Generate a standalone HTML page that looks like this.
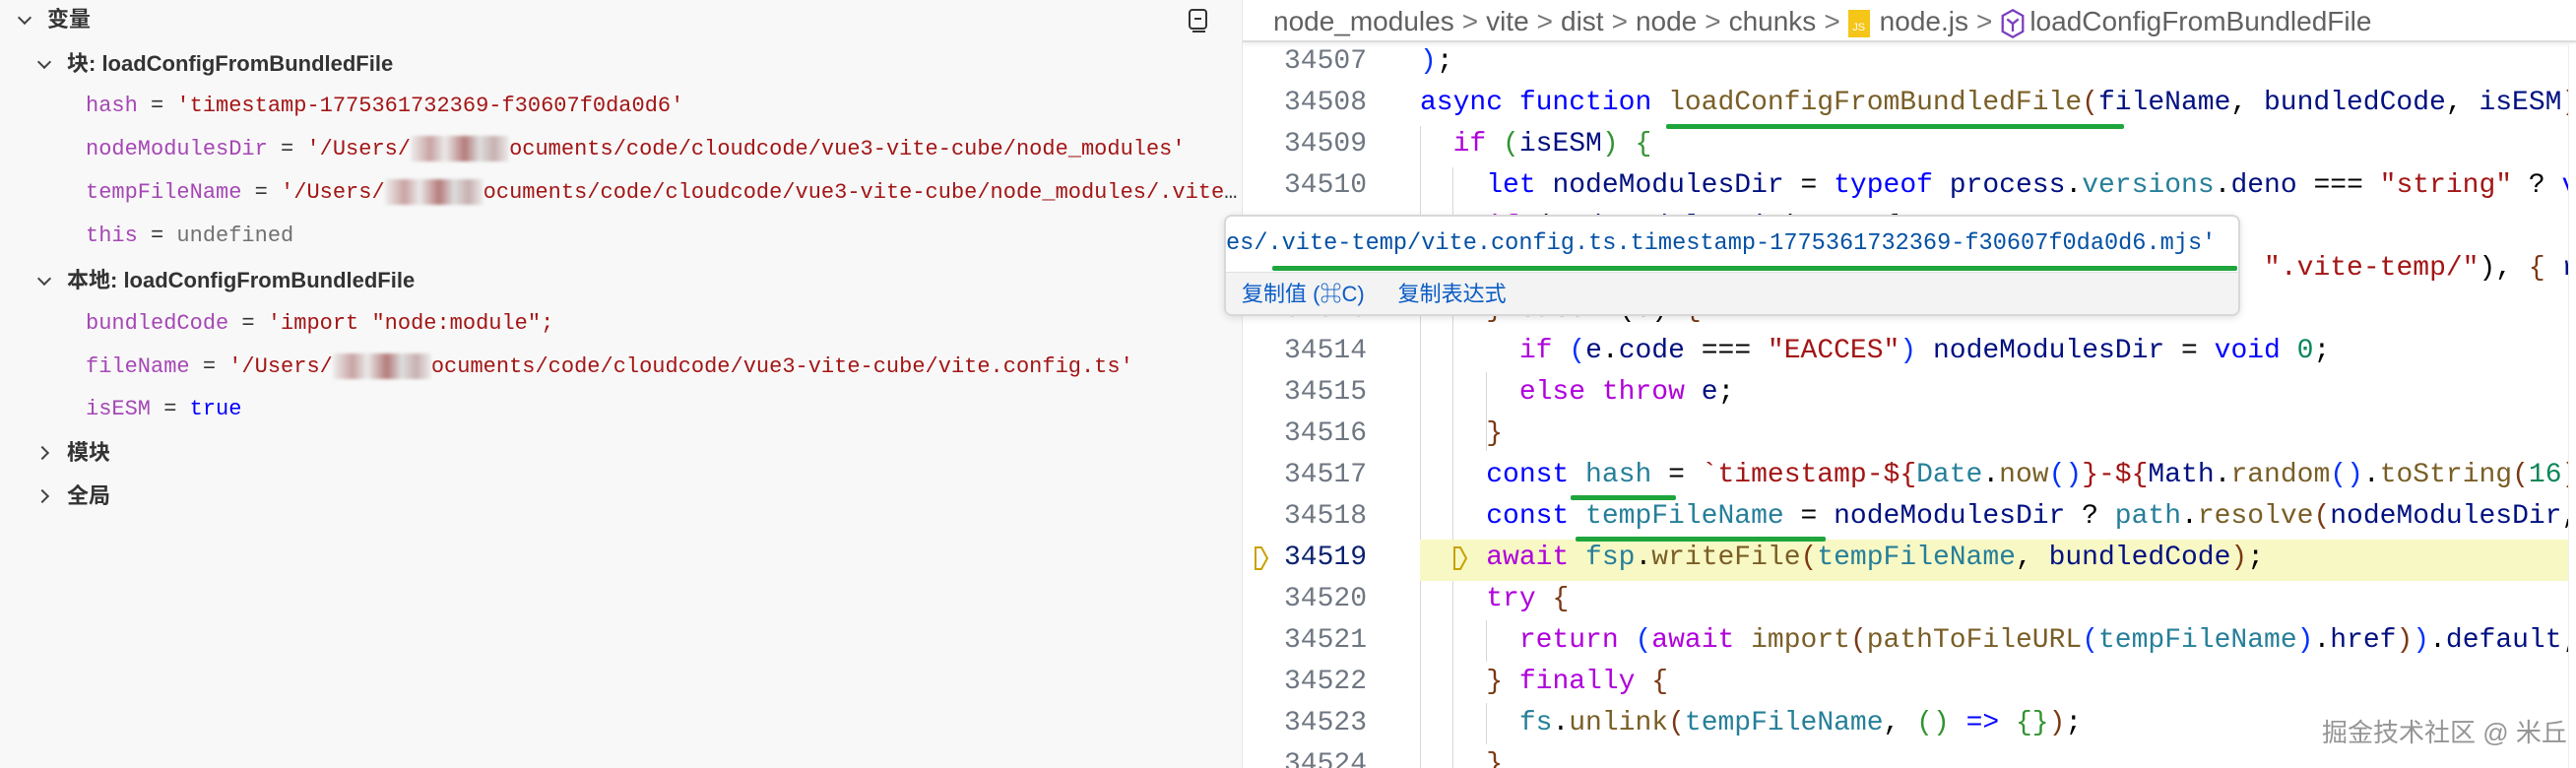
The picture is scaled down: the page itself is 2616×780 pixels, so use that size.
<!DOCTYPE html>
<html><head><meta charset="utf-8"><style>
*{margin:0;padding:0;box-sizing:border-box}
body{width:2616px;height:780px;overflow:hidden;background:#fff;position:relative;font-family:"Liberation Sans","Noto Sans CJK SC",sans-serif}
#left{position:absolute;left:0;top:0;width:1262px;height:780px;background:#f8f8f8;border-right:1px solid #e6e6e6;overflow:hidden}
.r{position:absolute;height:44px;line-height:44px;white-space:nowrap}
.h{font-size:22px;color:#333;font-weight:bold}
.v{font-family:"Liberation Mono","Noto Sans CJK SC",monospace;font-size:22px;color:#333;left:87px;max-width:1175px;overflow:hidden;text-overflow:ellipsis}
.n{color:#a547b5}.s{color:#a31515}.u{color:#717171}.t{color:#0000ff}
.blur{display:inline-block;width:100px;height:26px;vertical-align:middle;background:linear-gradient(90deg,#eee,#c9a3a3 20%,#eaeaea 35%,#b57b7b 55%,#ddd 70%,#c8b0b0 85%,#eee);filter:blur(1.5px)}
.chev{position:absolute;width:10px;height:10px;border-right:2px solid #444;border-bottom:2px solid #444}
#ed{position:absolute;left:1262px;top:0;width:1354px;height:780px;background:#fff;overflow:hidden}
#bc{position:absolute;left:0;top:0;width:1354px;height:43px;border-bottom:2px solid #ddd;font-size:28px;color:#616161;line-height:43px;padding-left:31px;white-space:nowrap;box-shadow:0 2px 4px rgba(0,0,0,.08)}
#bc i{font-style:normal;margin:0 8px;color:#777}
.ln{position:absolute;left:42px;width:84px;text-align:right;font-family:"Liberation Mono",monospace;font-size:28px;color:#6e7681;height:42px;line-height:42px}
.c{position:absolute;left:180px;font-family:"Liberation Mono",monospace;font-size:28px;height:42px;line-height:42px;white-space:pre;color:#000}
.k{color:#0000ff}.p{color:#af00db}.f{color:#795e26}.a{color:#001080}.st{color:#a31515}.nu{color:#098658}.ty{color:#267f99}
.b1{color:#0431fa}.b2{color:#319331}.b3{color:#7b3814}
.g{position:absolute;background:#1ea53c;height:5px;border-radius:2px}
.ig{position:absolute;width:1px;background:#d8d8d8}
</style></head><body>
<div id="left">
<div class="chev" style="left:20px;top:13px;transform:rotate(45deg)"></div>
<div class="r h" style="left:48px;top:-2px;font-weight:bold">变量</div>
<svg style="position:absolute;left:1204px;top:8px" width="26" height="26" viewBox="0 0 26 26"><rect x="4" y="2" width="17" height="19" rx="3" fill="none" stroke="#333" stroke-width="2"/><line x1="9" y1="11" x2="16" y2="11" stroke="#333" stroke-width="2"/><line x1="7" y1="24" x2="20" y2="24" stroke="#333" stroke-width="2"/></svg>
<div class="chev" style="left:40px;top:58px;transform:rotate(45deg)"></div>
<div class="r h" style="left:68px;top:43px">块: loadConfigFromBundledFile</div>
<div class="r v" style="top:86px"><span class="n">hash</span> = <span class="s">'timestamp-1775361732369-f30607f0da0d6'</span></div>
<div class="r v" style="top:130px"><span class="n">nodeModulesDir</span> = <span class="s">'/Users/<span class="blur"></span>ocuments/code/cloudcode/vue3-vite-cube/node_modules'</span></div>
<div class="r v" style="top:174px"><span class="n">tempFileName</span> = <span class="s">'/Users/<span class="blur"></span>ocuments/code/cloudcode/vue3-vite-cube/node_modules/.vite-temp/vite.config.ts'</span></div>
<div class="r v" style="top:218px"><span class="n">this</span> = <span class="u">undefined</span></div>
<div class="chev" style="left:40px;top:278px;transform:rotate(45deg)"></div>
<div class="r h" style="left:68px;top:263px">本地: loadConfigFromBundledFile</div>
<div class="r v" style="top:307px"><span class="n">bundledCode</span> = <span class="s">'import "node:module";</span></div>
<div class="r v" style="top:351px"><span class="n">fileName</span> = <span class="s">'/Users/<span class="blur"></span>ocuments/code/cloudcode/vue3-vite-cube/vite.config.ts'</span></div>
<div class="r v" style="top:394px"><span class="n">isESM</span> = <span class="t">true</span></div>
<div class="chev" style="left:38px;top:455px;transform:rotate(-45deg)"></div>
<div class="r h" style="left:68px;top:438px">模块</div>
<div class="chev" style="left:38px;top:499px;transform:rotate(-45deg)"></div>
<div class="r h" style="left:68px;top:482px">全局</div>
</div>

<div id="ed">
<div id="bc">node_modules<i>&gt;</i>vite<i>&gt;</i>dist<i>&gt;</i>node<i>&gt;</i>chunks<i>&gt;</i><span style="display:inline-block;width:22px;height:28px;background:#f5c518;color:#fff;font-size:11px;line-height:36px;text-align:center;vertical-align:middle;margin-right:10px">JS</span>node.js<i>&gt;</i><svg width="26" height="32" viewBox="0 0 22 28" style="vertical-align:middle;margin-right:4px"><path d="M11 2 L20 7 V21 L11 26 L2 21 V7 Z" fill="none" stroke="#7a3dbf" stroke-width="2"/><path d="M6 10 L11 14 L16 10 M11 14 V21" fill="none" stroke="#7a3dbf" stroke-width="2"/></svg>loadConfigFromBundledFile</div>

<div class="ig" style="left:180px;top:128px;height:652px"></div>
<div class="ig" style="left:213px;top:170px;height:610px"></div>
<div class="ig" style="left:247px;top:378px;height:80px"></div>
<div class="ig" style="left:247px;top:630px;height:42px"></div>
<div class="ig" style="left:247px;top:714px;height:42px"></div>

<div style="position:absolute;left:180px;top:548px;width:1166px;height:42px;background:#f8f8c4"></div>

<div class="ln" style="top:42px">34507</div><div class="c" style="top:42px"><span class="b1">)</span>;</div>
<div class="ln" style="top:84px">34508</div><div class="c" style="top:84px"><span class="k">async</span> <span class="k">function</span> <span class="f">loadConfigFromBundledFile</span><span class="b3">(</span><span class="a">fileName</span>, <span class="a">bundledCode</span>, <span class="a">isESM</span><span class="b3">)</span> {</div>
<div class="ln" style="top:126px">34509</div><div class="c" style="top:126px">  <span class="p">if</span> <span class="b2">(</span><span class="a">isESM</span><span class="b2">)</span> <span class="b2">{</span></div>
<div class="ln" style="top:168px">34510</div><div class="c" style="top:168px">    <span class="k">let</span> <span class="a">nodeModulesDir</span> = <span class="k">typeof</span> <span class="a">process</span>.<span class="ty">versions</span>.<span class="a">deno</span> === <span class="st">"string"</span> ? <span class="k">void</span> <span class="nu">0</span> : <span class="f">findNearestNodeModules</span>();</div>
<div class="ln" style="top:210px">34511</div><div class="c" style="top:210px">    <span class="p">if</span> (<span class="a">nodeModulesDir</span>) <span class="p">try</span> {</div>
<div class="ln" style="top:252px">34512</div><div class="c" style="top:252px">      <span class="p">await</span> <span class="a">fsp</span>.<span class="f">mkdir</span>(<span class="ty">path</span>.<span class="f">resolve</span>(<span class="a">nodeModulesDir</span>, <span class="st">".vite-temp/"</span>), <span class="b3">{</span> <span class="a">recursive</span>: <span class="k">true</span> });</div>
<div class="ln" style="top:294px">34513</div><div class="c" style="top:294px">    <span class="b3">}</span> <span class="p">catch</span> (<span class="a">e</span>) <span class="b3">{</span></div>
<div class="ln" style="top:336px">34514</div><div class="c" style="top:336px">      <span class="p">if</span> <span class="b1">(</span><span class="a">e</span>.<span class="a">code</span> === <span class="st">"EACCES"</span><span class="b1">)</span> <span class="a">nodeModulesDir</span> = <span class="k">void</span> <span class="nu">0</span>;</div>
<div class="ln" style="top:378px">34515</div><div class="c" style="top:378px">      <span class="p">else</span> <span class="p">throw</span> <span class="a">e</span>;</div>
<div class="ln" style="top:420px">34516</div><div class="c" style="top:420px">    <span class="b3">}</span></div>
<div class="ln" style="top:462px">34517</div><div class="c" style="top:462px">    <span class="k">const</span> <span class="ty">hash</span> = <span class="st">`timestamp-${</span><span class="ty">Date</span>.<span class="f">now</span><span class="b1">()</span><span class="st">}-${</span><span class="a">Math</span>.<span class="f">random</span><span class="b1">()</span>.<span class="f">toString</span><span class="b3">(</span><span class="nu">16</span><span class="b3">)</span>.<span class="f">slice</span>(<span class="nu">2</span>)<span class="st">}`</span>;</div>
<div class="ln" style="top:504px">34518</div><div class="c" style="top:504px">    <span class="k">const</span> <span class="ty">tempFileName</span> = <span class="a">nodeModulesDir</span> ? <span class="ty">path</span>.<span class="f">resolve</span><span class="b3">(</span><span class="a">nodeModulesDir</span>, <span class="st">".vite-temp"</span>)</div>
<div class="ln" style="top:546px;color:#0b216f">34519</div><div class="c" style="top:546px">    <span class="p">await</span> <span class="ty">fsp</span>.<span class="f">writeFile</span><span class="b3">(</span><span class="ty">tempFileName</span>, <span class="a">bundledCode</span><span class="b3">)</span>;</div>
<svg style="position:absolute;left:11px;top:554px" width="16" height="26" viewBox="0 0 16 26"><path d="M2 2 H8 L14 13 L8 24 H2 Z" fill="none" stroke="#c9a100" stroke-width="2"/></svg>
<svg style="position:absolute;left:213px;top:554px" width="16" height="26" viewBox="0 0 16 26"><path d="M2 2 H8 L14 13 L8 24 H2 Z" fill="none" stroke="#c9a100" stroke-width="2"/></svg>
<div class="ln" style="top:588px">34520</div><div class="c" style="top:588px">    <span class="p">try</span> <span class="b3">{</span></div>
<div class="ln" style="top:630px">34521</div><div class="c" style="top:630px">      <span class="p">return</span> <span class="b1">(</span><span class="p">await</span> <span class="f">import</span><span class="b3">(</span><span class="f">pathToFileURL</span><span class="b1">(</span><span class="ty">tempFileName</span><span class="b1">)</span>.<span class="a">href</span><span class="b3">)</span><span class="b1">)</span>.<span class="a">default</span>;</div>
<div class="ln" style="top:672px">34522</div><div class="c" style="top:672px">    <span class="b3">}</span> <span class="p">finally</span> <span class="b3">{</span></div>
<div class="ln" style="top:714px">34523</div><div class="c" style="top:714px">      <span class="ty">fs</span>.<span class="f">unlink</span><span class="b3">(</span><span class="ty">tempFileName</span>, <span class="b2">()</span> <span class="k">=&gt;</span> <span class="b2">{}</span><span class="b3">)</span>;</div>
<div class="ln" style="top:756px">34524</div><div class="c" style="top:756px">    <span class="b3">}</span></div>

<div class="g" style="left:430px;top:126px;width:465px"></div>
<div class="g" style="left:333px;top:503px;width:107px"></div>
<div class="g" style="left:338px;top:545px;width:254px"></div>

<div style="position:absolute;right:0;top:45px;width:8px;height:735px;border-left:1px solid #eee;background:#fff"></div>
<div style="position:absolute;left:1096px;top:724px;font-size:26px;color:#8a8a8a;opacity:.9;text-shadow:0 0 2px #fff;white-space:nowrap">掘金技术社区 @ 米丘</div>
</div>

<div style="position:absolute;left:1243px;top:218px;width:1032px;height:103px;border:2px solid #d8d8d8;border-radius:8px;background:#fff;box-shadow:0 2px 8px rgba(0,0,0,.12);overflow:hidden">
<div style="position:absolute;left:0;top:0;height:56px;line-height:56px;font-family:'Liberation Mono',monospace;font-size:23.6px;color:#0451a5;white-space:nowrap">es/.vite-temp/vite.config.ts.timestamp-1775361732369-f30607f0da0d6.mjs'</div>
<div style="position:absolute;left:0;top:56px;width:100%;height:47px;background:#f3f3f3;border-top:1px solid #e0e0e0;font-size:22px;color:#0b5cc6;line-height:44px;white-space:nowrap"><span style="margin-left:16px">复制值 (⌘C)</span><span style="margin-left:34px">复制表达式</span></div>
<div class="g" style="left:47px;top:50px;width:980px"></div>
</div>
</body></html>
